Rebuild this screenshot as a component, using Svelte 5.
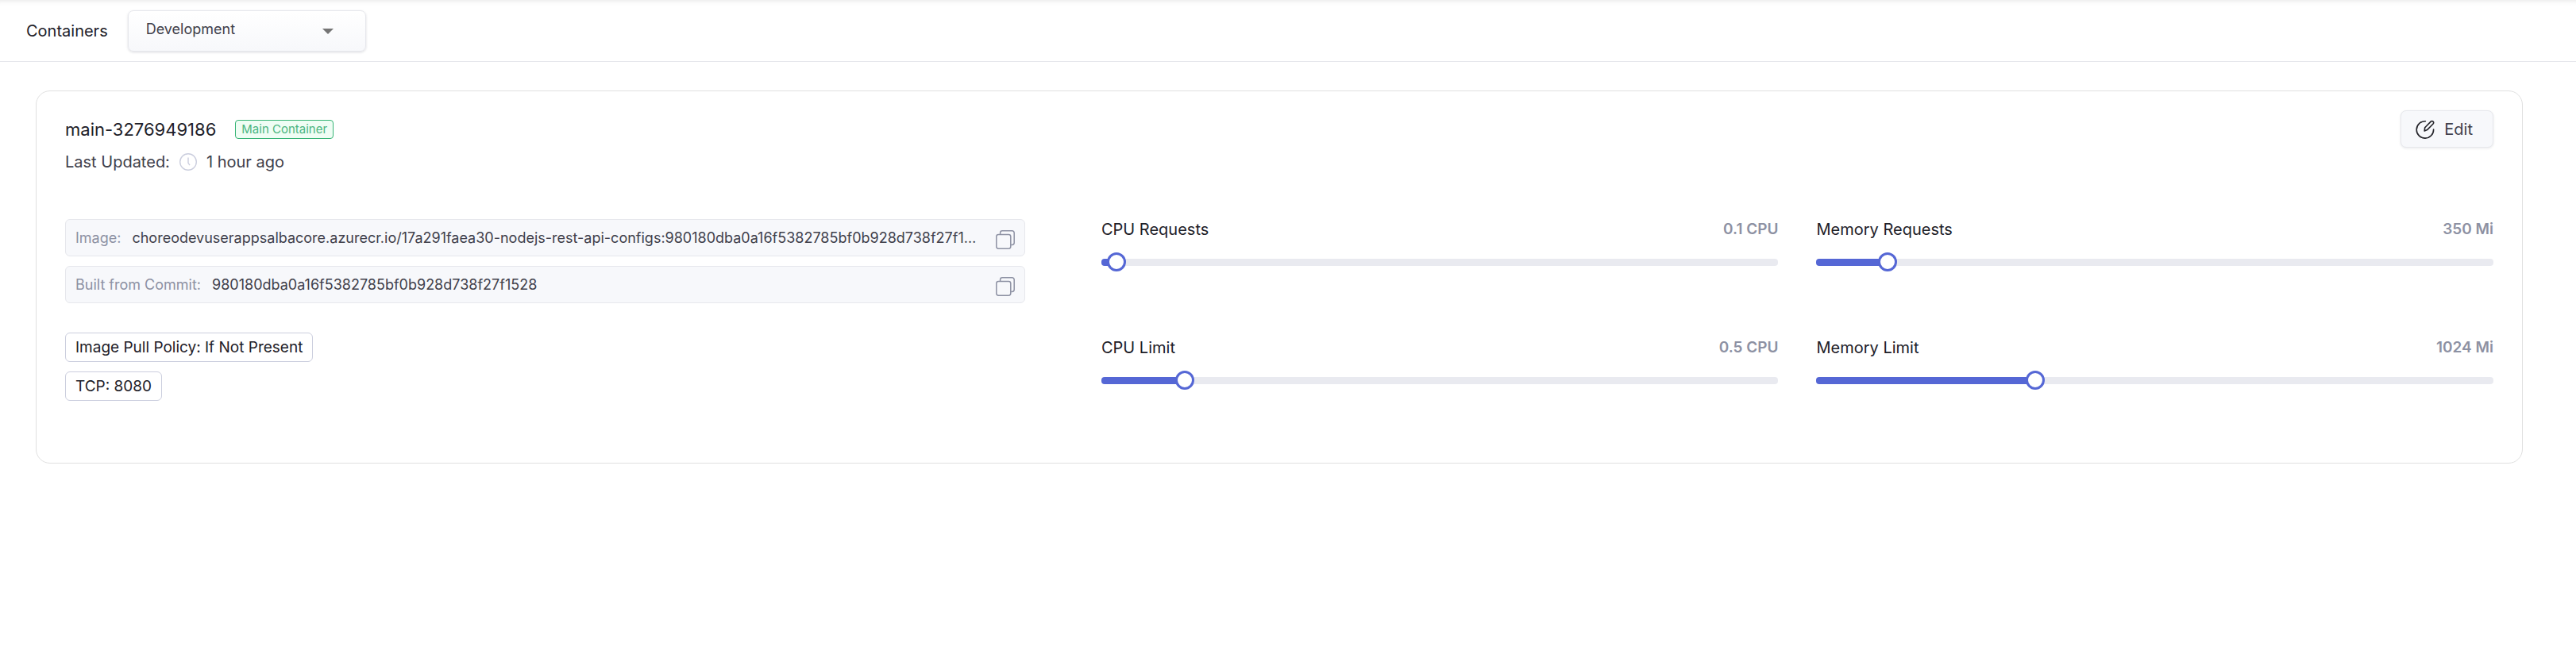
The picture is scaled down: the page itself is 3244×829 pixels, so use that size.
<script lang="ts">
  const environments = ['Development', 'Production'];
  let environment = $state('Development');

  const container = {
    name: 'main-3276949186',
    updated: '1 hour ago',
    details: [
      {
        label: 'Image:',
        value:
          'choreodevuserappsalbacore.azurecr.io/17a291faea30-nodejs-rest-api-configs:980180dba0a16f5382785bf0b928d738f27f1528',
      },
      { label: 'Built from Commit:', value: '980180dba0a16f5382785bf0b928d738f27f1528' },
    ],
    chips: ['Image Pull Policy: If Not Present', 'TCP: 8080'],
  };

  let resources = $state([
    { id: 'cpu-requests', label: 'CPU Requests', unit: 'CPU', value: 0.1, min: 0.068, max: 3.93 },
    { id: 'memory-requests', label: 'Memory Requests', unit: 'Mi', value: 350, min: 71, max: 3067 },
    { id: 'cpu-limit', label: 'CPU Limit', unit: 'CPU', value: 0.5, min: 0.068, max: 3.93 },
    { id: 'memory-limit', label: 'Memory Limit', unit: 'Mi', value: 1024, min: 71, max: 3067 },
  ]);

  function fill(r: { value: number; min: number; max: number }) {
    return (r.value - r.min) / (r.max - r.min);
  }
</script>

<header class="toolbar">
  <label class="toolbar-label" for="environment">Containers</label>
  <div class="select">
    <select id="environment" bind:value={environment}>
      {#each environments as name}
        <option value={name}>{name}</option>
      {/each}
    </select>
    <svg class="caret" viewBox="0 0 14 7" aria-hidden="true">
      <path d="M0 0h14L7 7z" />
    </svg>
  </div>
</header>

<main>
  <section class="card">
    <div class="card-head">
      <div>
        <div class="title-row">
          <h2>{container.name}</h2>
          <span class="badge">Main Container</span>
        </div>
        <div class="updated">
          <span>Last Updated:</span>
          <svg class="clock" viewBox="0 0 22 22" aria-hidden="true">
            <circle cx="11" cy="11" r="10.3" />
            <path d="M11 5.5v6.8l2 2.8" />
          </svg>
          <span>{container.updated}</span>
        </div>
      </div>
      <button class="edit" type="button">
        <svg viewBox="0 0 24 24" aria-hidden="true">
          <path d="M12.4 1.7A10.7 10.7 0 1 0 22.6 12" />
          <path d="M11.2 13.9l.5-4.2 7.5-7.6a2 2 0 0 1 2.9 0 2 2 0 0 1 0 2.9l-7.5 7.6z" />
        </svg>
        Edit
      </button>
    </div>

    <div class="card-body">
      <div class="info">
        {#each container.details as detail}
          <div class="detail">
            <span class="detail-label">{detail.label}</span>
            <span class="detail-value">{detail.value}</span>
            <button class="copy" type="button" aria-label="Copy {detail.label}">
              <svg viewBox="0 0 24 24" aria-hidden="true">
                <path d="M5.6 5.2V3.4A2.6 2.6 0 0 1 8.2.8h12.4a2.6 2.6 0 0 1 2.6 2.6v12.4a2.6 2.6 0 0 1-2.6 2.6h-1.4" />
                <rect x=".8" y="5.4" width="18" height="17.8" rx="2.6" />
              </svg>
            </button>
          </div>
        {/each}
        <div class="chips">
          {#each container.chips as chip}
            <span class="chip">{chip}</span>
          {/each}
        </div>
      </div>

      <div class="resources">
        {#each resources as resource}
          <div class="resource">
            <div class="resource-head">
              <label for={resource.id}>{resource.label}</label>
              <output for={resource.id}>{resource.value} {resource.unit}</output>
            </div>
            <input
              id={resource.id}
              type="range"
              min={resource.min}
              max={resource.max}
              step="any"
              bind:value={resource.value}
              style="--fill: {fill(resource)}"
            />
          </div>
        {/each}
      </div>
    </div>
  </section>
</main>

<style>
  :global(body) {
    background: #fff;
    color: #1d2028;
    font-family: Inter, 'Liberation Sans', sans-serif;
    font-size: 20px;
    line-height: 24px;
  }

  .toolbar {
    display: flex;
    align-items: center;
    gap: 25px;
    padding: 13px 33px 12px;
    border-bottom: 1px solid #e6e7ec;
    box-shadow: inset 0 7px 6px -6px rgba(0, 0, 0, 0.1);
  }

  .select {
    position: relative;
    width: 300px;
  }

  select {
    display: block;
    width: 100%;
    height: 52px;
    padding: 0 60px 4px 22px;
    appearance: none;
    border: 1px solid #e6e7ec;
    border-radius: 7px;
    background: linear-gradient(#fff, #f7f8fb);
    box-shadow: 0 1px 3px rgba(40, 45, 70, 0.16);
    color: #40404b;
    font: inherit;
    font-size: 18px;
  }

  .caret {
    position: absolute;
    top: 23px;
    right: 41px;
    width: 14px;
    height: 7px;
    fill: #757575;
    pointer-events: none;
  }

  main {
    padding: 36px 67px 36px 45px;
  }

  .card {
    padding: 24px 36px 78px;
    border: 1px solid #e0e0e0;
    border-radius: 18px;
  }

  .card-head {
    display: flex;
    justify-content: space-between;
    align-items: flex-start;
  }

  .title-row {
    display: flex;
    align-items: center;
    gap: 24px;
    padding-top: 10px;
  }

  h2 {
    margin: 0;
    font-size: 22px;
    font-weight: 400;
    line-height: 28px;
  }

  .badge {
    padding: 0 7px;
    border: 1px solid #36b475;
    border-radius: 4px;
    background: #effdf4;
    color: #4bb581;
    font-size: 15px;
    line-height: 22px;
  }

  .updated {
    display: flex;
    align-items: center;
    gap: 12px;
    padding-top: 15px;
    color: #40404b;
  }

  .clock {
    width: 22px;
    height: 22px;
    fill: none;
    stroke: #cbcede;
    stroke-width: 1.4;
  }

  .edit {
    display: flex;
    align-items: center;
    gap: 12px;
    height: 47px;
    padding: 0 25px 0 18px;
    border: 1px solid #e6e7ec;
    border-radius: 7px;
    background: #f7f8fb;
    box-shadow: 0 1px 3px rgba(40, 45, 70, 0.1);
    color: #40404b;
    font: inherit;
  }

  .edit svg {
    width: 24px;
    height: 24px;
    fill: none;
    stroke: #222228;
    stroke-width: 1.6;
    stroke-linecap: round;
    stroke-linejoin: round;
  }

  .card-body {
    display: grid;
    grid-template-columns: 20fr 29fr;
    gap: 96px;
    padding-top: 60px;
  }

  .info {
    display: flex;
    flex-direction: column;
    gap: 12px;
    min-width: 0;
  }

  .detail {
    display: flex;
    align-items: center;
    height: 45px;
    padding: 0 12px;
    border: 1px solid #e6e7ec;
    border-radius: 6px;
    background: #f7f8fb;
    font-size: 18px;
  }

  .detail-label {
    flex: none;
    margin-right: 14px;
    color: #8d91a3;
  }

  .detail-value {
    flex: 1;
    min-width: 0;
    margin-right: 24px;
    overflow: hidden;
    color: #40404b;
    text-overflow: ellipsis;
    white-space: nowrap;
  }

  .copy {
    flex: none;
    display: block;
    padding: 4px 0 0;
    border: 0;
    background: none;
  }

  .copy svg {
    display: block;
    width: 24px;
    height: 24px;
    fill: none;
    stroke: #8d91a3;
    stroke-width: 1.5;
  }

  .chips {
    display: flex;
    flex-direction: column;
    align-items: flex-start;
    gap: 12px;
    padding-top: 25px;
  }

  .chip {
    padding: 5px 12px;
    border: 1px solid #cbcede;
    border-radius: 6px;
    font-size: 19px;
    line-height: 25px;
  }

  .resources {
    display: grid;
    grid-template-columns: 1fr 1fr;
    gap: 83px 48px;
    align-content: start;
  }

  .resource-head {
    display: flex;
    justify-content: space-between;
    line-height: 26px;
  }

  output {
    color: #8d91a3;
    font-size: 19px;
    font-weight: 600;
  }

  input[type='range'] {
    --stop: calc(12px + var(--fill) * (100% - 24px));
    display: block;
    width: 100%;
    height: 24px;
    margin: 16px 0 0;
    padding: 0;
    appearance: none;
    background: none;
  }

  input[type='range']::-webkit-slider-runnable-track {
    height: 9px;
    border-radius: 4px;
    background: linear-gradient(to right, #5567d5 var(--stop), #e9eaf0 var(--stop));
  }

  input[type='range']::-webkit-slider-thumb {
    width: 24px;
    height: 24px;
    margin-top: -8px;
    appearance: none;
    border: 3px solid #5567d5;
    border-radius: 50%;
    background: #fff;
    box-sizing: border-box;
  }
</style>
